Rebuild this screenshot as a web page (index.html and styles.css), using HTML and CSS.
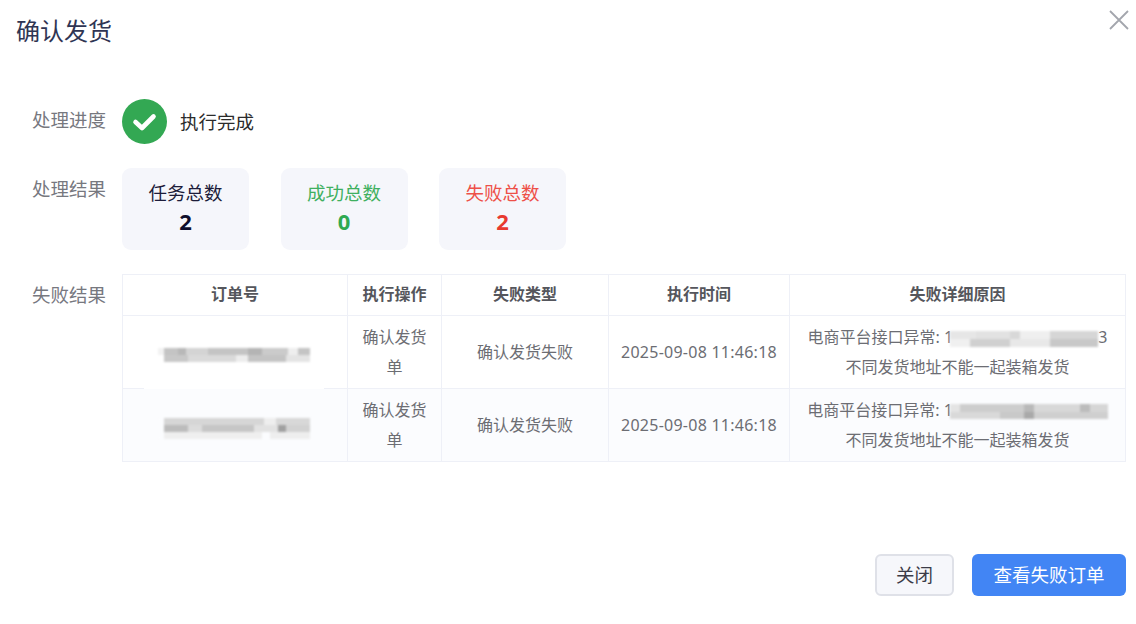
FILE: index.html
```html
<!DOCTYPE html>
<html lang="zh-CN">
<head>
<meta charset="utf-8">
<title>确认发货</title>
<link rel="stylesheet" href="styles.css">
</head>
<body>
<div class="dialog">
  <header class="head">
    <h1 class="title">确认发货</h1>
    <button class="close" aria-label="关闭">
      <svg width="20" height="20" viewBox="0 0 20 20"><path d="M1 1 19 19M19 1 1 19" fill="none" stroke="#a3a6ad" stroke-width="1.8"/></svg>
    </button>
  </header>
  <div class="form">
    <div class="row">
      <div class="label">处理进度</div>
      <div class="status">
        <svg class="status-icon" width="45" height="45" viewBox="0 0 45 45"><circle cx="22.5" cy="22.5" r="22.5" fill="#33a853"/><path d="M13.5 23 20 29 31.5 17.5" fill="none" stroke="#fff" stroke-width="4.6" stroke-linecap="round" stroke-linejoin="round"/></svg>
        <span class="status-text">执行完成</span>
      </div>
    </div>
    <div class="row">
      <div class="label">处理结果</div>
      <div class="stats">
        <div class="stat"><div class="stat-name">任务总数</div><div class="stat-num">2</div></div>
        <div class="stat ok"><div class="stat-name">成功总数</div><div class="stat-num">0</div></div>
        <div class="stat bad"><div class="stat-name">失败总数</div><div class="stat-num">2</div></div>
      </div>
    </div>
    <div class="row">
      <div class="label">失败结果</div>
      <table class="grid">
        <colgroup><col class="c1"><col class="c2"><col class="c3"><col class="c4"><col class="c5"></colgroup>
        <thead>
          <tr><th>订单号</th><th>执行操作</th><th>失败类型</th><th>执行时间</th><th>失败详细原因</th></tr>
        </thead>
        <tbody>
          <tr>
            <td class="order patched"><span class="mask m-order-a"></span></td>
            <td>确认发货单</td>
            <td>确认发货失败</td>
            <td class="time">2025-09-08 11:46:18</td>
            <td>电商平台接口异常: 1<span class="mask m-detail-a"></span>3<br>不同发货地址不能一起装箱发货</td>
          </tr>
          <tr class="alt">
            <td class="order"><span class="mask m-order-b"></span></td>
            <td>确认发货单</td>
            <td>确认发货失败</td>
            <td class="time">2025-09-08 11:46:18</td>
            <td>电商平台接口异常: 1<span class="mask m-detail-b"></span><br>不同发货地址不能一起装箱发货</td>
          </tr>
        </tbody>
      </table>
    </div>
  </div>
  <footer class="foot">
    <button class="btn">关闭</button>
    <button class="btn primary">查看失败订单</button>
  </footer>
</div>
</body>
</html>
```
FILE: styles.css
```css
* { box-sizing: border-box; }
html, body { margin: 0; background: #fff; }
body {
  width: 1136px;
  height: 624px;
  overflow: hidden;
  font-family: "Noto Sans", "Noto Sans CJK SC", sans-serif;
  color: #333;
}
.dialog { padding: 0 10px 0 16px; }
.head {
  display: flex;
  justify-content: space-between;
  height: 62px;
}
.title {
  margin: 0;
  font-size: 24px;
  font-weight: 400;
  line-height: 62px;
  color: #2f3553;
}
.close {
  width: 20px;
  height: 20px;
  margin: 10px -3px 0 0;
  padding: 0;
  border: 0;
  background: none;
  display: block;
}
.close svg { display: block; }
.form {
  margin-top: 37px;
  padding-left: 16px;
  display: flex;
  flex-direction: column;
  gap: 24px;
}
.row { display: flex; align-items: flex-start; }
.label {
  width: 90px;
  flex: none;
  font-size: 18.5px;
  line-height: 42px;
  color: #77787f;
}
.status { display: flex; align-items: center; gap: 13px; height: 45px; }
.status-icon { display: block; }
.status-text { font-size: 18.5px; color: #2b2b2b; padding-bottom: 2px; }
.stats { display: flex; gap: 31.5px; }
.stat {
  width: 127px;
  height: 82px;
  padding-top: 11px;
  border-radius: 9px;
  background: #f5f6fb;
  text-align: center;
  color: #1c1c3a;
}
.stat-name { font-size: 18.5px; line-height: 28px; }
.stat-num { font-size: 22px; font-weight: 700; line-height: 28px; color: #0e0e2c; }
.ok .stat-name { color: #3fb060; }
.ok .stat-num { color: #2fa952; }
.bad .stat-name { color: #ee5048; }
.bad .stat-num { color: #e8392f; }
.grid {
  width: 1003px;
  table-layout: fixed;
  border-collapse: collapse;
  font-size: 16px;
  color: #6c6d73;
}
.c1 { width: 225px; }
.c2 { width: 94px; }
.c3 { width: 167px; }
.c4 { width: 181px; }
.c5 { width: 336px; }
.grid th, .grid td {
  border: 1px solid #eef0f7;
  text-align: center;
  vertical-align: middle;
}
.grid th {
  height: 41px;
  padding: 0 8px 5px;
  font-weight: 700;
  color: #55565c;
}
.grid td {
  height: 73px;
  padding: 0 12px;
  line-height: 30px;
}
.grid td.order { padding: 0; position: relative; }
.grid td.time { letter-spacing: 0.25px; padding: 0; }
.alt td { background: #fbfcfe; }
.patched::after {
  content: "";
  position: absolute;
  left: 21px;
  right: 23px;
  bottom: -2px;
  height: 3px;
  background: #fff;
}
.mask {
  display: inline-block;
  vertical-align: middle;
  background-repeat: no-repeat;
  filter: blur(0.8px);
}
.m-order-a {
  width: 152px;
  height: 14px;
  margin: 3px 2px 0 0;
  background-image:
    linear-gradient(90deg, #f2f2f2 0 6px, #c4c4c4 6px 20px, #b8b8b8 20px 28px, #d4d4d4 28px 50px, #c4c4c4 50px 90px, #b4b4b4 90px 104px, #cbcbcb 104px 130px, #eee 130px 140px, #c4c4c4 140px 152px),
    linear-gradient(90deg, #fff 0 6px, #c8c8c8 6px 30px, #dadada 30px 78px, #ededed 78px 90px, #c4c4c4 90px 128px, #e4e4e4 128px 152px);
  background-size: 100% 7px;
  background-position: 0 0, 0 7px;
}
.m-order-b {
  width: 152px;
  height: 21px;
  margin: 3px 2px 0 0;
  background-image:
    linear-gradient(90deg, #fbfcfe 0 6px, #d6d6d6 6px 106px, #eeeeee 106px 118px, #d8d8d8 118px 152px),
    linear-gradient(90deg, #fbfcfe 0 6px, #bcbcbc 6px 30px, #dcdcdc 30px 44px, #c6c6c6 44px 96px, #e2e2e2 96px 120px, #a0a0a0 120px 128px, #d2d2d2 128px 152px),
    linear-gradient(90deg, #fbfcfe 0 6px, #efefef 6px 104px, #fbfcfe 104px 112px, #eeeeee 112px 152px);
  background-size: 100% 7px;
  background-position: 0 0, 0 7px, 0 14px;
}
.m-detail-a {
  width: 148px;
  height: 16px;
  margin-left: -3px;
  background-image:
    linear-gradient(90deg, #e6e6e6 0 26px, #e2e2e2 26px 60px, #d8d8d8 60px 70px, #efefef 70px 100px, #d6d6d6 100px 148px),
    linear-gradient(90deg, #f0f0f0 0 20px, #d0d0d0 20px 60px, #e8e8e8 60px 100px, #c8c8c8 100px 148px);
  background-size: 100% 8px;
  background-position: 0 0, 0 8px;
}
.m-detail-b {
  width: 158px;
  height: 15px;
  margin-left: -3px;
  background-image:
    linear-gradient(90deg, #e4e4e4 0 10px, #cdcdcd 10px 74px, #b9b9b9 74px 84px, #d8d8d8 84px 130px, #bcbcbc 130px 140px, #d6d6d6 140px 158px),
    linear-gradient(90deg, #d9d9d9 0 50px, #c9c9c9 50px 74px, #a9a9a9 74px 84px, #cfcfcf 84px 158px);
  background-size: 100% 8px;
  background-position: 0 0, 0 8px;
}
.foot {
  margin-top: 92px;
  display: flex;
  justify-content: flex-end;
  gap: 18px;
}
.btn {
  width: 79px;
  height: 42px;
  padding: 0 0 2px;
  border: 2px solid #dfe1e8;
  border-radius: 6px;
  background: #f6f7fb;
  color: #3b3c48;
  font: 18.5px "Noto Sans", "Noto Sans CJK SC", sans-serif;
}
.primary {
  width: 154px;
  border: 0;
  background: #4285f4;
  color: #fff;
}
```
